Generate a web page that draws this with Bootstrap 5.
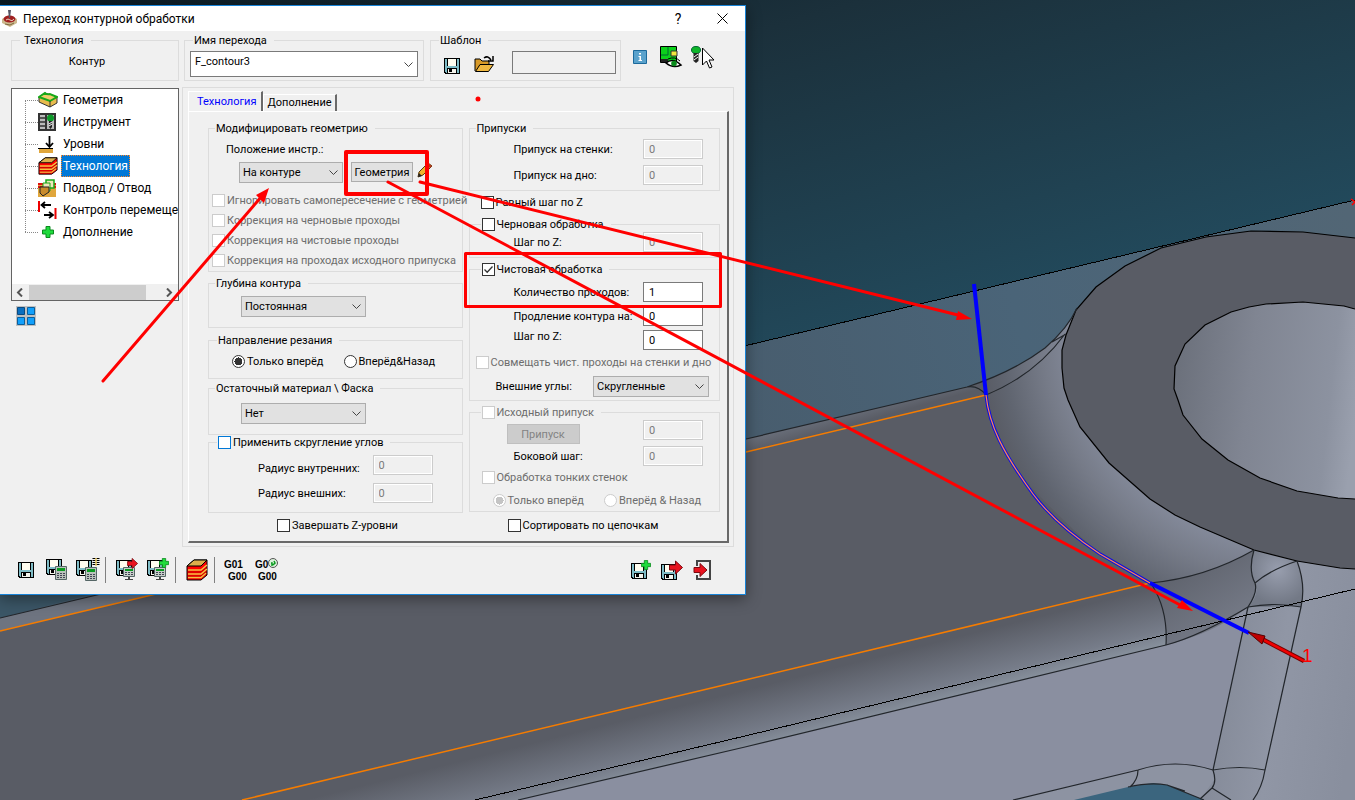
<!DOCTYPE html>
<html lang="ru">
<head>
<meta charset="utf-8">
<meta name="viewport" content="width=device-width, initial-scale=1">
<title>Переход контурной обработки</title>
<link rel="stylesheet" href="https://cdn.jsdelivr.net/npm/bootstrap@5.3.0/dist/css/bootstrap.min.css">
<style>
  body { font: 11px/13px Roboto, "Noto Sans", sans-serif; color: #000; background: #595c65; overflow: hidden; min-height: 100vh; }
  svg { display: block; }
  .scene, .notes { position: absolute; top: 0; left: 0; width: 100%; height: 100vh; }
  .notes { pointer-events: none; z-index: 5; }

  /* dialog frame */
  .dialog { position: relative; width: 746px; max-width: 100%; margin-top: 5px; background: #f0f0f0; border: solid #1883d7; border-width: 1px 1px 1px 0; box-shadow: 0 4px 14px rgba(0,0,0,.4); }
  .titlebar { height: 25px; background: #fff; padding: 0 14px 0 2px; }
  .titlebar h1 { font-size: 12px; line-height: 16px; margin: 0 auto 0 6px; font-weight: 400; }
  .winbtn { border: 0; background: none; padding: 0; width: 18px; font-size: 14px; line-height: 18px; color: #000; }
  .winbtn + .winbtn { margin-left: 26px; }
  .side { width: 168px; flex: none; }
  .main { flex: 1 1 0; min-width: 0; }
  .dlgbody { padding: 3px 11px 0; gap: 3px; }

  /* group boxes */
  fieldset { border: 1px solid #dcdcdc; min-width: 0; }
  legend { float: none; width: auto; margin: 0 0 0 6px; padding: 0 7px 0 1px; font-size: 11px; line-height: 13px; }
  legend.haspick { height: 15px; }
  .opt { display: inline-flex; align-items: center; gap: 2px; height: 15px; white-space: nowrap; }
  .opt.off { color: #6d6d6d; }
  .tick { appearance: none; flex: none; width: 13px; height: 13px; margin: 0; background: #fff center/11px no-repeat; border: 1px solid #333; }
  .tick:checked { background-image: url("data:image/svg+xml,%3Csvg xmlns='http://www.w3.org/2000/svg' viewBox='0 0 11 11'%3E%3Cpath d='M1.5 5.5l2.7 2.8L9.5 2.5' fill='none' stroke='%23333' stroke-width='1.3'/%3E%3C/svg%3E"); }
  .tick:disabled { border-color: #ccc; }
  .tick.hot { border-color: #0078d7; }
  .tick[type=radio] { border-radius: 50%; }
  .tick[type=radio]:checked { background-image: radial-gradient(circle, #333 0 4px, transparent 4px); }
  .tick[type=radio]:checked:disabled { background-image: radial-gradient(circle, #c4c4c4 0 4px, transparent 4px); }
  .num { width: 60px; height: 20px; flex: none; font: inherit; padding: 0 5px; border: 1px solid #7a7a7a; background: #fff; color: #000; border-radius: 0; }
  .num:disabled { background: #f0f0f0; border-color: #ccc; box-shadow: inset 0 0 0 1px #fff; color: #7a7a7a; opacity: 1; }
  .pick { height: 21px; font: inherit; line-height: 18px; color: #000; padding: 0 20px 0 3px; border: 1px solid #adadad; border-radius: 0; background: #e1e1e1 url("data:image/svg+xml,%3Csvg xmlns='http://www.w3.org/2000/svg' viewBox='0 0 9 5'%3E%3Cpath d='M.5.5l4 4 4-4' fill='none' stroke='%23444'/%3E%3C/svg%3E") right 4px center/9px 5px no-repeat; }
  .pick.long { width: 125px; margin-left: 32px; }
  .pick.name { height: 26px; background-color: #fff; border-color: #7a7a7a; width: 228px; margin: 4px 5px 3px; padding: 0 20px 5px 4px; }
  .push { font: inherit; height: 20px; padding: 0; color: #000; background: #e1e1e1; border: 1px solid #adadad; border-radius: 0; }
  .push:disabled { background: #ccc; border-color: #bfbfbf; color: #838383; opacity: 1; }
  .iconbtn { border: 0; background: none; padding: 0; display: flex; align-items: center; justify-content: center; }

  /* navigation tree */
  .tree { height: 213px; margin-top: 7px; background: #fff; border: 1px solid #646464; overflow: hidden; position: relative; }
  .tree ul { margin: 0 0 0 13px; height: 195px; list-style: none; padding: 0; font-size: 12px; line-height: 16px; white-space: nowrap; overflow: hidden; }
  .tree li { height: 22px; display: flex; align-items: center; }
  .tree li::before { content: ""; width: 13px; height: 1px; flex: none; background: linear-gradient(90deg, #888 50%, transparent 0) 0 0/2px 1px repeat-x; }
  .tree li > svg { flex: none; }
  .tree li > a { color: #000; text-decoration: none; margin-left: 3px; padding: 2px; line-height: 18px; }
  .tree li > a.sel { background: #0078d7; color: #fff; outline: 1px dotted #ff8728; outline-offset: -1px; }
  .trunk { position: absolute; left: 13px; top: 12px; height: 132px; width: 1px; background: linear-gradient(#888 50%, transparent 0) 0 0/1px 2px; }
  .hbar { height: 16px; background: #f0f0f0; }
  .hbar i { width: 117px; height: 15px; background: #cdcdcd; }

  /* tabs */
  .panelbox { border: 1px solid #dcdcdc; padding: 4px 4px 3px 5px; margin-top: 6px; }
  .tabs { height: 19px; padding: 0; }
  .tabs a { font-size: 11px; color: #000; text-decoration: none; padding: 1px 3px 0 4px; height: 17px; border: solid #fff; border-width: 1px 0 0 1px; border-right: 2px solid #696969; }
  .tabs a.on { color: #00f; height: 20px; padding: 3px 4px 0 8px; position: relative; background: #f0f0f0; }
  .page { border: solid; border-width: 1px 2px 2px 1px; border-color: #fff #696969 #696969 #fff; padding: 10px 7px 6px 19px; gap: 6px; }
  .lcol { flex: 255 1 0; min-width: 0; } .rcol { flex: 252 1 0; min-width: 0; }
  .frow { display: flex; align-items: center; justify-content: space-between; padding: 0 16px 0 44px; height: 20px; white-space: nowrap; }
  .frow.wide { padding: 0 29px 0 49px; }
  .m2 { margin-top: 2px; } .m3 { margin-top: 3px; } .m5 { margin-top: 5px; } .m6 { margin-top: 6px; } .m7 { margin-top: 7px; } .m9 { margin-top: 9px; }
  .b3 { padding-bottom: 3px; } .b5 { padding-bottom: 5px; } .b9 { padding-bottom: 9px; } .b10 { padding-bottom: 10px; }
  .stackopts { padding-bottom: 1px; }
  .stackopts .opt { display: flex; height: 20px; padding-left: 3px; }

  .toolbar { padding: 7px 27px 9px 10px; }
  .toolbar .iconbtn { width: 31px; height: 31px; }
  .vsep { width: 1px; height: 26px; background: #808080; margin: 0 5px 0 2px; align-self: center; }
</style>
</head>
<body>

<svg width="0" height="0" class="position-absolute" aria-hidden="true">
  <defs>
    <symbol id="floppy" viewBox="0 0 16 16">
      <g shape-rendering="crispEdges"><path d="M0 0h16v16H1l-1-1z" fill="#000"/><path d="M1 1h14v14H2l-1-1z" fill="#7fbcc6"/><path d="M3 0h10v8H3z" fill="#000"/><path d="M4 1h8v7H4z" fill="#fffdf0"/><path d="M3 10h10v6H3z" fill="#000"/><path d="M4 11h8v4H4z" fill="#f4f4ec"/><path d="M5 11h3v3H5z" fill="#000"/></g>
    </symbol>
    <symbol id="calc" viewBox="0 0 12 14"><path d="M.5.5h11v13H.5z" fill="#b9c2bb" stroke="#566"/><path d="M2 2h8v3H2z" fill="#0a9a20"/><path d="M2 7h2v1H2zm3 0h2v1H5zm3 0h2v1H8zM2 9h2v1H2zm3 0h2v1H5zm3 0h2v1H8zm-6 2h2v1H2zm3 0h2v1H5zm3 0h2v1H8z" fill="#445"/></symbol>
    <symbol id="simul" viewBox="0 0 12 14"><path d="M.5.5h11v9H.5z" fill="#c6cec8" stroke="#566"/><path d="M2 2h8v2H2z" fill="#0a9a20"/><path d="M2 5h2v1H2zm3 0h2v1H5zm3 0h2v1H8zM2 7h2v1H2zm3 0h2v1H5zm3 0h2v1H8z" fill="#445"/><path d="M5 10h2v2h3v1H2v-1h3z" fill="#444"/></symbol>
    <symbol id="plus" viewBox="0 0 12 12"><path d="M4 .5h4V4h3.500v4H8v3.500H4V8H.5V4H4z" fill="#1fdb3c" stroke="#0b8a1e"/></symbol>
    <symbol id="redarrow" viewBox="0 0 14 14"><path d="M.5 4.500h6v-4l7 6.500-7 6.500v-4h-6z" fill="#e8131f" stroke="#7d0a10"/></symbol>
    <symbol id="slab" viewBox="0 0 22 22"><path d="M1 7l7-6h13v15l-6 5H1z" fill="#f00" stroke="#000" stroke-linejoin="round"/><path d="M1 7l7-6h13l-6 6z" fill="#dcae4c" stroke="#000"/><path d="M2 11h13l6-5M2 15h13l6-5M2 18.500h13l5-4.500" fill="none" stroke="#f2c243" stroke-width="1.600"/><path d="M1 13h14l6-5M1 17h14l6-5" stroke="#900" stroke-width=".6" fill="none"/></symbol>
    <linearGradient id="sky" gradientUnits="userSpaceOnUse" x1="200" y1="-150" x2="500" y2="900"><stop offset="0" stop-color="#04121a"/><stop offset=".3" stop-color="#1b303b"/><stop offset=".6" stop-color="#22495b"/><stop offset="1" stop-color="#447086"/></linearGradient>
    <linearGradient id="plane" gradientUnits="userSpaceOnUse" x1="745" y1="400" x2="1355" y2="230"><stop offset="0" stop-color="#485d6e"/><stop offset=".45" stop-color="#4a6478"/><stop offset="1" stop-color="#526675"/></linearGradient>
    <linearGradient id="hole" gradientUnits="userSpaceOnUse" x1="1174" y1="400" x2="1355" y2="420"><stop offset="0" stop-color="#6c717c"/><stop offset=".4" stop-color="#808592"/><stop offset=".85" stop-color="#8c92a0"/><stop offset="1" stop-color="#9aa0ae"/></linearGradient>
    <linearGradient id="edge" gradientUnits="userSpaceOnUse" x1="745" y1="435" x2="750" y2="453"><stop offset="0" stop-color="#6e7480"/><stop offset="1" stop-color="#595c65"/></linearGradient>
    <linearGradient id="slope" gradientUnits="userSpaceOnUse" x1="745" y1="690" x2="759" y2="746"><stop offset="0" stop-color="#595c65"/><stop offset=".75" stop-color="#767c89"/><stop offset="1" stop-color="#87909c"/></linearGradient>
    <radialGradient id="fillet" gradientUnits="userSpaceOnUse" cx="1290" cy="330" r="310"><stop offset=".7" stop-color="#838999"/><stop offset=".8" stop-color="#767b88"/><stop offset=".93" stop-color="#606570"/><stop offset="1" stop-color="#595c65"/></radialGradient>
    <linearGradient id="corner" gradientUnits="userSpaceOnUse" x1="1170" y1="570" x2="1215" y2="640"><stop offset="0" stop-color="#5e626c"/><stop offset="1" stop-color="#767b88"/></linearGradient>
    <linearGradient id="column" gradientUnits="userSpaceOnUse" x1="1215" y1="680" x2="1355" y2="700"><stop offset="0" stop-color="#848a98"/><stop offset=".45" stop-color="#9096a5"/><stop offset="1" stop-color="#898f9e"/></linearGradient>
    <radialGradient id="shine" gradientUnits="userSpaceOnUse" cx="1278" cy="570" r="34"><stop offset="0" stop-color="#989eae"/><stop offset="1" stop-color="#737986"/></radialGradient>
  </defs>
</svg>

<!-- 3D model viewport -->
<svg class="scene" viewBox="0 0 1355 800" preserveAspectRatio="xMinYMin slice" aria-hidden="true">
  <rect width="1355" height="800" fill="url(#sky)"/>
  <path d="M0 530L746 346 1355 200V500H1000L967 387 912 400 746 439 101 594 0 618z" fill="url(#plane)"/>
  <path d="M0 590h108L0 618z" fill="#3b5666"/>
  <path d="M0 618L101 594 746 439 912 400 967 387 986 395 1150 583 1355 560V800H0z" fill="#595c65"/>
  <path d="M0 618L101 594 746 439 912 400 967 387Q980 387 986 395L746 452 156 594 0 631z" fill="url(#edge)"/>
  <path d="M242 800L745 680 1150 583 1240 560 1355 560V800z" fill="url(#slope)"/>
  <path d="M518 800L745 747 1166 645Q1225 625 1250 600L1355 560V800z" fill="#8a8fa0"/>
  <path d="M1248 607L1255 583 1254 550 1355 560V800H1200L1213 770z" fill="url(#column)"/>
  <path d="M967 387Q1013 372 1045 348 1068 328 1077 308L1110 300 1120 470 1260 552Q1210 580 1150 583 1130 572 1099 553 1033 494 1010 460 990 425 986 395 980 386 967 387z" fill="url(#fillet)"/>
  <path d="M1150 583Q1210 576 1254 550 1249 568 1255 583 1258 592 1248 607 1215 633 1166 645 1169 610 1150 583z" fill="url(#corner)"/>
  <path d="M1254 550L1297 561Q1306 585 1301 607L1248 607Q1260 595 1255 583 1248 568 1254 550z" fill="url(#shine)"/>
  <path d="M1355 238L1303 232 1251 231 1206 237 1161 248 1125 266 1096 287 1076 310 1066 335 1062 350 1062 368 1064 388 1068 400 1080 427 1109 463 1150 499 1175 515 1200 527 1254 550 1297 561 1340 568 1355 569" fill="#595c65" stroke="#000" stroke-width="1.200"/>
  <path d="M1355 309L1344 306 1303 302 1266 304 1249 307 1231 312 1205 325 1185 344 1175 366 1174 389 1178 400 1183 415 1202 439 1228 460 1260 478 1297 491 1338 498 1355 499" fill="url(#hole)" stroke="#000" stroke-width="1.200"/>
  <path d="M1013 800L1138 770Q1175 760 1213 770L1214 780 1200 800z" fill="#8d93a2"/>
  <path d="M1074 800L1128 787 1153 783 1167 785 1204 800z" fill="#3b657e"/>
  <g fill="none" stroke="#22262b" stroke-width="1.200">
    <path d="M0 618L101 594 746 439 912 400 967 387Q1013 372 1045 348 1068 328 1077 308M1065 334Q1035 375 986 395 978 385 967 387M1052 342L1066 334"/>
    <path d="M518 800L745 747 1166 645Q1200 636 1248 607 1258 592 1255 583 1248 570 1254 550"/>
    <path d="M1150 583Q1205 578 1254 550M1152 585Q1168 610 1166 645M1255 583Q1270 570 1297 561 1306 585 1301 607L1265 770Q1262 788 1253 800M1248 607L1213 770Q1217 782 1212 788L1200 799M1212 788L1231 800M1248 607Q1275 602 1301 607M1213 770Q1240 765 1265 770"/>
    <path d="M1013 800L1138 770Q1175 758 1213 770M1138 770Q1138 780 1130 787M1128 787Q1150 782 1167 785L1204 800M1167 785L1185 791"/>
  </g>
  <path d="M740 347L1355 200M475 800L745 736 1355 589" stroke="#000" fill="none" shape-rendering="crispEdges"/>
  <path d="M0 631L156 594 746 452 986 395M242 800L745 680 1150 583" stroke="#f57c00" stroke-width="1.500" fill="none"/>
  <path d="M974 284L986 395" stroke="#00f" stroke-width="4"/>
  <path d="M986 395C989 425 1003 453 1033 494 1050 517 1076 538 1100 554L1150 583" stroke="#0a0ae8" stroke-width="3.200" fill="none"/>
  <path d="M986 395C989 425 1003 453 1033 494 1050 517 1076 538 1100 554L1150 583" stroke="#ff8a50" stroke-width="1.200" fill="none"/>
  <path d="M1150 583L1249 633" stroke="#00f" stroke-width="4"/>
  <path d="M1260 638L1304 661" stroke="#700" stroke-width="4.500"/><path d="M1260 638L1304 661" stroke="#f00000" stroke-width="2.500"/>
  <path d="M1248 632L1265 636 1262 644z" fill="#c00000" stroke="#500"/>
  <path d="M1351 199l4 3-3 3" stroke="#f00" stroke-width="1.500" fill="none"/>
  <text x="1302" y="662" font-family="Liberation Sans, sans-serif" font-size="19" fill="#f00">1</text>
</svg>

<main class="dialog">
  <header class="titlebar d-flex align-items-center">
    <svg width="15" height="17" viewBox="0 0 15 17"><path d="M0 9l7-4 8 4v4l-7 4-8-4z" fill="#cdb98e"/><ellipse cx="7.500" cy="9" rx="6" ry="3.500" fill="#a02020"/><path d="M4 10q2-2 4 0t4-1" stroke="#e8d0c0" fill="none"/><path d="M6 0h3l-1 8H7z" fill="#556"/><path d="M3 14l5 1 4-2" stroke="#7d6b40" fill="none"/></svg>
    <h1>Переход контурной обработки</h1>
    <button class="winbtn" aria-label="Справка">?</button>
    <button class="winbtn d-flex justify-content-center" aria-label="Закрыть"><svg width="11" height="11" viewBox="0 0 11 11"><path d="M.5.5l10 10M10.500.5l-10 10" stroke="#000"/></svg></button>
  </header>

  <div class="dlgbody d-flex">
    <aside class="side">
      <fieldset style="height:47px"><legend class="ms-2 ps-1">Технология</legend><div class="text-center pt-2 pe-3">Контур</div></fieldset>
      <nav class="tree">
        <span class="trunk"></span>
        <ul>
          <li><svg width="20" height="18" viewBox="0 0 20 18"><path d="M1 6l6-4 12 4v6l-7 4L1 11z" fill="#e7bb4d" stroke="#333"/><path d="M1 6l6-4q3 2 5 1l7 3-7 4z" fill="#f0cc6a" stroke="#18a818" stroke-width="2"/><path d="M12 10v6" stroke="#333"/></svg><a href="#">Геометрия</a></li>
          <li><svg width="20" height="18" viewBox="0 0 20 18"><path d="M0 0h18v18H0z" fill="#333"/><path d="M2 2h5v14H2zM9 2h7v14H9z" fill="#bbb"/><path d="M2 5h5M2 9h5M2 13h5" stroke="#333" stroke-width="1.500"/><circle cx="12.500" cy="5" r="3.500" fill="#0c9a28"/><path d="M11 8h3v6l-1.500 2L11 14z" fill="#222"/><path d="M11 11l3-2M11 13l3-2" stroke="#fff"/></svg><a href="#">Инструмент</a></li>
          <li><svg width="20" height="18" viewBox="0 0 20 18"><path d="M1 14h14v4H1z" fill="#e0a63c"/><path d="M0 13.500h15" stroke="#000"/><path d="M11.500 1v11M8 8l3.500 4L15 8" stroke="#000" stroke-width="1.800" fill="none"/></svg><a href="#">Уровни</a></li>
          <li><svg width="20" height="18" viewBox="0 0 22 22" preserveAspectRatio="none"><use href="#slab" width="22" height="22"/></svg><a href="#" class="sel">Технология</a></li>
          <li><svg width="20" height="18" viewBox="0 0 20 18"><path d="M0 5h18v13H0z" fill="#e0a63c"/><path d="M0 5h18M0 8h18" stroke="#e01010" stroke-width="2"/><path d="M8 1h8v8H8z" fill="#efe6bb" stroke="#18a818" stroke-width="1.500"/><path d="M5 4h7v8H5z" fill="#efe6bb" stroke="#18a818"/><path d="M2 8h9v5l-6 4-3-3z" fill="#c98b2a" stroke="#222"/></svg><a href="#">Подвод / Отвод</a></li>
          <li><svg width="20" height="18" viewBox="0 0 20 18"><path d="M1 0v11M17.500 7v11" stroke="#e00" stroke-width="2"/><path d="M13 4H4M7 1L3.500 4 7 7M6 14h9M11 11l4 3-4 3" stroke="#000" stroke-width="1.800" fill="none"/></svg><a href="#">Контроль перемеще</a></li>
          <li><svg width="20" height="18" viewBox="0 0 20 18"><use href="#plus" x="4" y="3" width="12" height="12"/></svg><a href="#">Дополнение</a></li>
        </ul>
        <div class="hbar d-flex align-items-center"><svg width="17" height="9" viewBox="0 0 17 9"><path d="M10 .5l-4 4 4 4" stroke="#555" stroke-width="2" fill="none"/></svg><i></i><svg class="ms-auto" width="17" height="9" viewBox="0 0 17 9"><path d="M6 .5l4 4-4 4" stroke="#555" stroke-width="2" fill="none"/></svg></div>
      </nav>
      <button class="iconbtn m5" style="margin-left:5px" aria-label="Вид"><svg width="20" height="20" viewBox="0 0 20 20"><path d="M0 0h20v20H0z" fill="#c0c0c0"/><path d="M1.500 1.500h7v7h-7z" fill="#0a6fc0" stroke="#0b4a80"/><path d="M11.500 1.500h7v7h-7zM1.500 11.500h7v7h-7zM11.500 11.500h7v7h-7z" fill="#12a0fb" stroke="#0b5f9c"/></svg></button>
    </aside>

    <div class="main">
      <div class="d-flex">
        <fieldset style="margin-left:2px"><legend class="ms-2">Имя перехода</legend>
          <select class="pick name form-select" aria-label="Имя перехода"><option>F_contour3</option></select></fieldset>
        <fieldset class="d-block" style="margin-left:6px;width:191px"><legend class="ms-2">Шаблон</legend>
          <div class="d-flex" style="padding:4px 4px 0 13px">
            <button class="iconbtn m7" aria-label="Сохранить шаблон" style="height:16px"><svg width="16" height="16"><use href="#floppy"/></svg></button>
            <button class="iconbtn" aria-label="Открыть шаблон" style="height:26px;margin-left:14px"><svg width="21" height="18" viewBox="0 0 21 18"><path d="M1 16V4h5l2 2h7v4" fill="#d89a28" stroke="#000"/><path d="M1.500 16.500L6 9.500h13.500l-5 7z" fill="#f0b840" stroke="#000"/><path d="M10 3q4-3 7 2M19 1v5h-5" stroke="#000" stroke-width="1.500" fill="none"/></svg></button>
            <input class="num ms-auto bg-transparent" style="width:104px;height:23px" aria-label="Шаблон">
          </div></fieldset>
        <div class="d-flex align-items-start" style="padding:16px 0 0 12px">
          <button class="iconbtn" aria-label="Сведения"><svg width="14" height="14" viewBox="0 0 14 14"><path d="M.5.5h13v13H.5z" fill="#5aa2cc" stroke="#1c6a9c"/><path d="M6 3h2v1.500H6zM5.500 6H8v4h1v1H5.500v-1H6.500V7h-1z" fill="#fff"/></svg></button>
          <button class="iconbtn" style="margin:-4px 0 0 13px" aria-label="Показать"><svg width="23" height="22" viewBox="0 0 23 22"><path d="M.5.5h16v16H.5z" fill="#0bd01a" stroke="#000"/><path d="M8 1v8M1 9h7" stroke="#063"/><path d="M11 5h6v5h-6z" fill="#f3e83c" stroke="#333"/><path d="M1 13h7v3H1z" fill="#222"/><path d="M6 17q7-6 15 2-8 4-15-2z" fill="#fff" stroke="#000" stroke-width="1.500"/><circle cx="14" cy="17.500" r="2.800" fill="#0a8a1c"/><path d="M8 13q7-3 12 2" stroke="#000" fill="none"/></svg></button>
          <button class="iconbtn" style="margin:-4px 0 0 8px" aria-label="Инструмент"><svg width="24" height="23" viewBox="0 0 24 23"><ellipse cx="5" cy="4" rx="4.500" ry="3.500" fill="#0fb62a" stroke="#063"/><path d="M2.500 7h5v8l-2.500 2-2.500-2z" fill="#222"/><path d="M3 11l4-3M3 14l4-3" stroke="#fff"/><path d="M11.500 2v17l4-4 3 7 2.500-1-3-7h5z" fill="#fff" stroke="#000"/></svg></button>
        </div>
      </div>

      <div class="panelbox">
        <nav class="tabs d-flex align-items-end"><a href="#" class="on">Технология</a><a href="#">Дополнение</a></nav>
        <div class="page d-flex">
          <div class="lcol">
            <fieldset><legend>Модифицировать геометрию</legend>
              <label for="pos" class="d-block" style="padding:8px 0 0 17px">Положение инстр.:</label>
              <div class="d-flex" style="margin:6px 0 7px 30px">
                <select id="pos" class="pick form-select" style="width:104px"><option>На контуре</option></select>
                <button class="push btn" style="width:62px;margin-left:8px">Геометрия</button>
                <button class="iconbtn ms-1" aria-label="Правка" style="height:16px"><svg width="16" height="16" viewBox="0 0 16 16"><path d="M1 15l1-5L11 1l4 3-9 9z" fill="#f0b42c" stroke="#5a3a10"/><path d="M11 1l4 3-2 2-4-3z" fill="#b43a20"/><path d="M1 15l1-4 3 3z" fill="#222"/></svg></button>
              </div>
              <div class="stackopts">
                <label class="opt off"><input class="tick" type="checkbox" disabled>Игнорировать самопересечение с геометрией</label>
                <label class="opt off"><input class="tick" type="checkbox" disabled>Коррекция на черновые проходы</label>
                <label class="opt off"><input class="tick" type="checkbox" disabled>Коррекция на чистовые проходы</label>
                <label class="opt off"><input class="tick" type="checkbox" disabled>Коррекция на проходах исходного припуска</label>
              </div>
            </fieldset>
            <fieldset class="m5 b10"><legend>Глубина контура</legend><select class="pick form-select long m6" aria-label="Глубина контура"><option>Постоянная</option></select></fieldset>
            <fieldset class="m6 b9"><legend class="ms-2">Направление резания</legend>
              <div class="d-flex m7" style="padding-left:23px;gap:20px">
                <label class="opt"><input class="tick" type="radio" name="dir" checked>Только вперёд</label>
                <label class="opt"><input class="tick" type="radio" name="dir">Вперёд&amp;Назад</label>
              </div></fieldset>
            <fieldset class="m3 b10"><legend>Остаточный материал \ Фаска</legend><select class="pick form-select long mt-2" aria-label="Остаточный материал"><option>Нет</option></select></fieldset>
            <fieldset class="b9"><legend class="haspick ms-2"><label class="opt"><input class="tick hot" type="checkbox">Применить скругление углов</label></legend>
              <div class="frow wide m5 align-items-end"><label for="rin">Радиус внутренних:</label><input id="rin" class="num" value="0" disabled></div>
              <div class="frow wide mt-2"><label for="rout">Радиус внешних:</label><input id="rout" class="num" value="0" disabled></div>
            </fieldset>
            <label class="opt m5" style="margin-left:69px"><input class="tick" type="checkbox">Завершать Z-уровни</label>
          </div>

          <div class="rcol">
            <fieldset class="b5"><legend>Припуски</legend>
              <div class="frow mt-1"><label for="wall">Припуск на стенки:</label><input id="wall" class="num" value="0" disabled></div>
              <div class="frow m6"><label for="floor">Припуск на дно:</label><input id="floor" class="num" value="0" disabled></div>
            </fieldset>
            <label class="opt d-flex mt-1" style="padding-left:12px"><input class="tick" type="checkbox">Равный шаг по Z</label>
            <fieldset class="m7 b5"><legend class="haspick" style="margin-left:11px"><label class="opt"><input class="tick" type="checkbox">Черновая обработка</label></legend>
              <div class="frow"><label for="zr">Шаг по Z:</label><input id="zr" class="num" value="0" disabled></div>
            </fieldset>
            <fieldset class="mt-1 b3"><legend class="haspick" style="margin-left:11px"><label class="opt"><input class="tick" type="checkbox" checked>Чистовая обработка</label></legend>
              <div class="frow m5"><label for="cnt">Количество проходов:</label><input id="cnt" class="num" value="1"></div>
              <div class="frow mt-1"><label for="ext">Продление контура на:</label><input id="ext" class="num" value="0"></div>
              <div class="frow mt-1"><label for="zf" class="pb-2">Шаг по Z:</label><input id="zf" class="num" value="0"></div>
              <label class="opt off d-flex m5" style="padding-left:6px"><input class="tick" type="checkbox" disabled>Совмещать чист. проходы на стенки и дно</label>
              <div class="d-flex align-items-center m6" style="padding:0 10px 0 26px"><label for="ang">Внешние углы:</label><select id="ang" class="pick form-select ms-auto" style="width:116px"><option>Скругленные</option></select></div>
            </fieldset>
            <fieldset class="mt-1 b3"><legend class="haspick" style="margin-left:11px"><label class="opt off"><input class="tick" type="checkbox" disabled>Исходный припуск</label></legend>
              <div class="frow" style="padding-left:37px"><button class="push btn mt-2" style="width:73px" disabled>Припуск</button><input class="num" value="0" aria-label="Припуск" disabled></div>
              <div class="frow m6"><label for="sstep">Боковой шаг:</label><input id="sstep" class="num" value="0" disabled></div>
              <label class="opt off d-flex mt-1" style="padding-left:12px"><input class="tick" type="checkbox" disabled>Обработка тонких стенок</label>
              <div class="d-flex mt-2" style="padding-left:23px;gap:20px">
                <label class="opt off"><input class="tick" type="radio" name="thin" checked disabled>Только вперёд</label>
                <label class="opt off"><input class="tick" type="radio" name="thin" disabled>Вперёд &amp; Назад</label>
              </div>
            </fieldset>
            <label class="opt m6" style="margin-left:39px"><input class="tick" type="checkbox">Сортировать по цепочкам</label>
          </div>
        </div>
      </div>
    </div>
  </div>

  <footer class="toolbar d-flex">
    <button class="iconbtn" aria-label="Сохранить"><svg width="16" height="16"><use href="#floppy"/></svg></button>
    <button class="iconbtn" aria-label="Сохранить и рассчитать"><svg width="21" height="21" viewBox="0 0 21 21"><use href="#floppy" width="16" height="16"/><use href="#calc" x="9" y="7" width="12" height="14"/></svg></button>
    <button class="iconbtn" aria-label="Рассчитать список"><svg width="24" height="23" viewBox="0 0 24 23"><use href="#floppy" y="2" width="16" height="16"/><use href="#calc" x="9" y="9" width="12" height="14"/><path d="M18 0v8M22 0v8" stroke="#000" stroke-width="3" stroke-dasharray="1 1"/><path d="M20 0v8" stroke="#f0c020"/></svg></button>
    <span class="vsep"></span>
    <button class="iconbtn" aria-label="Симуляция"><svg width="22" height="23" viewBox="0 0 22 23"><use href="#floppy" y="2" width="16" height="16"/><use href="#simul" x="7" y="9" width="12" height="14"/><use href="#redarrow" x="11" width="11" height="11"/></svg></button>
    <button class="iconbtn" aria-label="Добавить симуляцию"><svg width="22" height="23" viewBox="0 0 22 23"><use href="#floppy" y="2" width="16" height="16"/><use href="#simul" x="7" y="9" width="12" height="14"/><use href="#plus" x="12" width="10" height="10"/></svg></button>
    <span class="vsep"></span>
    <button class="iconbtn" aria-label="Заготовка"><svg width="22" height="22"><use href="#slab"/></svg></button>
    <span class="vsep"></span>
    <button class="iconbtn" aria-label="G-код"><svg width="24" height="24" viewBox="0 0 24 24" font-family="Liberation Sans, sans-serif" font-size="10" font-weight="700"><text x="0" y="10">G01</text><text x="4" y="22">G00</text></svg></button>
    <button class="iconbtn" aria-label="Просмотр G-кода"><svg width="24" height="24" viewBox="0 0 24 24" font-family="Liberation Sans, sans-serif" font-size="10" font-weight="700"><text x="0" y="10">G0</text><text x="3" y="22">G00</text><circle cx="18" cy="5" r="4.500" fill="#d8f0d8" stroke="#555"/><path d="M16 5h1v3M19 3l1 2-2 2" stroke="#0a9a20" stroke-width="1.500" fill="none"/></svg></button>
    <button class="iconbtn ms-auto" aria-label="Сохранить и добавить"><svg width="20" height="19" viewBox="0 0 20 19"><use href="#floppy" y="3" width="16" height="16"/><use href="#plus" x="10" width="10" height="10"/></svg></button>
    <button class="iconbtn" aria-label="Сохранить и выйти"><svg width="22" height="20" viewBox="0 0 22 20"><use href="#floppy" y="4" width="16" height="16"/><use href="#redarrow" x="8" width="14" height="15"/></svg></button>
    <button class="iconbtn" aria-label="Выход"><svg width="19" height="20" viewBox="0 0 19 20"><path d="M4 6V1h13v18H4v-4" fill="none" stroke="#444" stroke-width="2"/><use href="#redarrow" y="3" width="15" height="14"/></svg></button>
  </footer>
</main>

<!-- red call-outs over the dialog and the model -->
<svg class="notes" viewBox="0 0 1355 800" preserveAspectRatio="xMinYMin slice" aria-hidden="true">
  <g fill="none" stroke="#f00" stroke-linejoin="round">
    <rect x="346" y="152" width="81" height="42" stroke-width="4"/>
    <rect x="465.500" y="253.500" width="255" height="53" stroke-width="3"/>
    <path d="M103 381L262 196M420 182L962 316M388 182L1182 606" stroke-width="3" stroke-linecap="round"/>
  </g>
  <path d="M269 188L264 203 256 195zM972 319L956 320 958 311zM1193 611L1177 608 1182 600z" fill="#f00"/>
  <circle cx="478" cy="99" r="2.500" fill="#f00"/>
</svg>
<script src="https://cdn.jsdelivr.net/npm/bootstrap@5.3.0/dist/js/bootstrap.bundle.min.js"></script>
</body>
</html>
